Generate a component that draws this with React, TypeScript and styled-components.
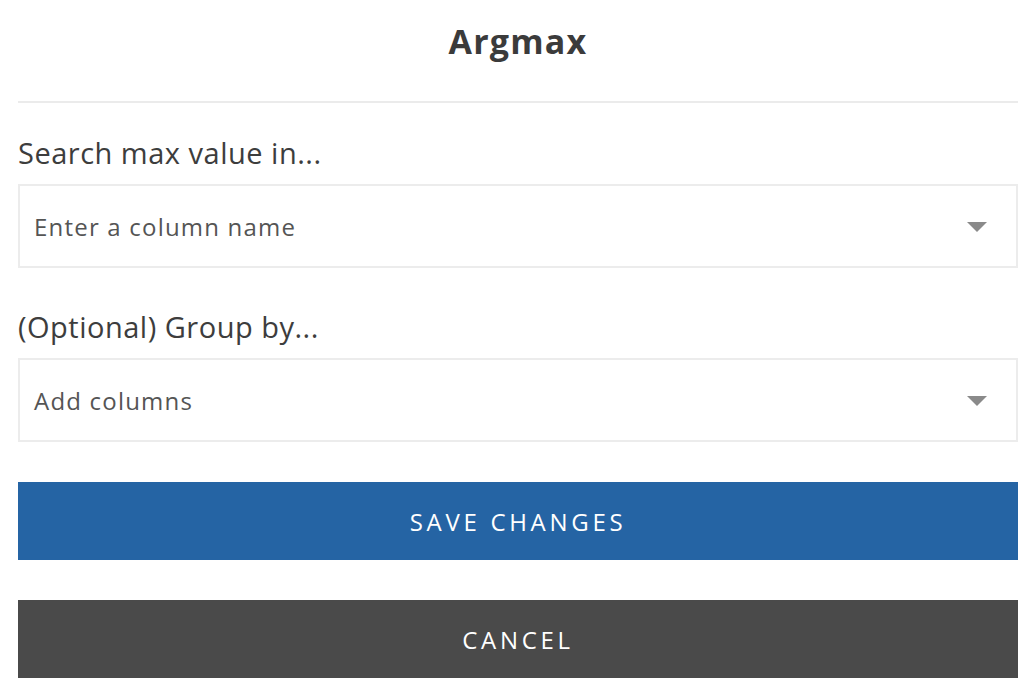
import React from "react";
import styled, { createGlobalStyle } from "styled-components";

const Global = createGlobalStyle`
  html, body { margin: 0; padding: 0; background: #ffffff; }
  body { font-family: "Open Sans", "Liberation Sans", sans-serif; }
  * { box-sizing: border-box; }
`;

const Panel = styled.div`
  display: flex;
  flex-direction: column;
  padding: 0 10px 0 18px;
`;

const Header = styled.header`
  display: flex;
  justify-content: center;
  align-items: flex-start;
  padding-top: 21px;
  height: 103px;
  border-bottom: 2px solid #ebebeb;
`;

const Title = styled.h1`
  margin: 0;
  font-size: 34px;
  line-height: 40px;
  font-weight: 700;
  color: #3b3b3b;
  letter-spacing: 1.2px;
`;

const Field = styled.section<{ $top: number }>`
  display: flex;
  flex-direction: column;
  margin-top: ${(p) => p.$top}px;
`;

const Label = styled.label`
  font-size: 29px;
  line-height: 36px;
  color: #3d3d3d;
  margin-bottom: 13px;
  letter-spacing: 0.5px;
`;

const Select = styled.div`
  display: flex;
  align-items: center;
  justify-content: space-between;
  height: 84px;
  border: 2px solid #ececec;
  padding: 0 29px 0 14px;
  background: #fff;
`;

const Placeholder = styled.span`
  font-size: 24px;
  color: #555555;
  letter-spacing: 1.2px;
`;

const Caret = styled.svg`
  width: 20px;
  height: 10px;
  margin-top: 2px;
`;

const Button = styled.button<{ $bg: string; $top: number }>`
  display: flex;
  align-items: center;
  justify-content: center;
  height: 78px;
  width: 100%;
  margin-top: ${(p) => p.$top}px;
  border: none;
  background: ${(p) => p.$bg};
  color: #ffffff;
  font-family: "Open Sans", "Liberation Sans", sans-serif;
  font-size: 24px;
  font-weight: 500;
  letter-spacing: 3.7px;
  text-transform: uppercase;
  cursor: pointer;
`;

const Arrow = () => (
  <Caret viewBox="0 0 20 10">
    <polygon points="0,0 20,0 10,10" fill="#8a8a8a" />
  </Caret>
);

export default function App() {
  return (
    <Panel>
      <Global />
      <Header>
        <Title>Argmax</Title>
      </Header>
      <Field $top={32}>
        <Label>Search max value in...</Label>
        <Select>
          <Placeholder>Enter a column name</Placeholder>
          <Arrow />
        </Select>
      </Field>
      <Field $top={41}>
        <Label>(Optional) Group by...</Label>
        <Select>
          <Placeholder>Add columns</Placeholder>
          <Arrow />
        </Select>
      </Field>
      <Button $bg="#2564a4" $top={40}>Save changes</Button>
      <Button $bg="#4a4a4a" $top={40}>Cancel</Button>
    </Panel>
  );
}
